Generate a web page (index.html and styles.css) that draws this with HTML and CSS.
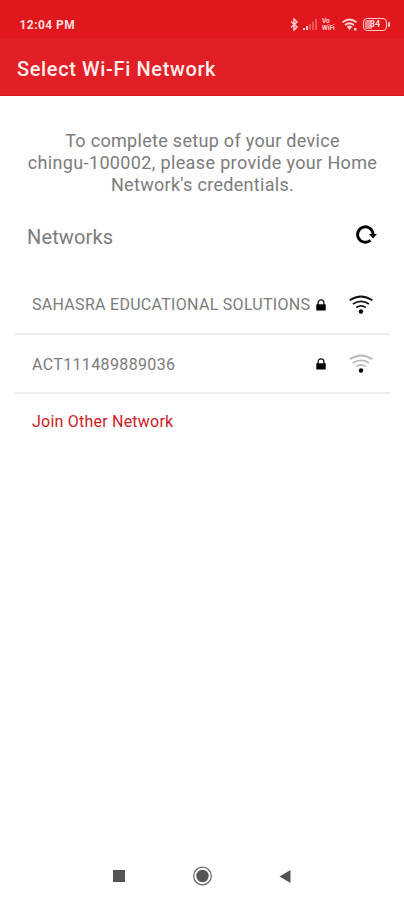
FILE: index.html
```html
<!DOCTYPE html>
<html lang="en">
<head>
<meta charset="utf-8">
<title>Select Wi-Fi Network</title>
<link rel="stylesheet" href="styles.css">
</head>
<body>
<div class="screen">
  <header class="status">
    <span class="time">12:04 PM</span>
    <div class="indicators">
      <svg class="bt" width="9" height="13" viewBox="0 0 9 13"><path d="M1 3.500l6 5.500-3 3V1l3 3-6 5.500"/></svg>
      <svg class="signal" width="16" height="13" viewBox="0 0 16 13"><path d="M0 10h2v2H0zM3 8h2v4H3z"/><path class="dim" d="M6 6h2v6H6zM9 3.500h2V12H9zM12 1h2v11h-2z"/></svg>
      <div class="vowifi"><span>Vo</span><span>WiFi</span></div>
      <svg class="wifi-status" width="16" height="13" viewBox="0 0 16 13"><path d="M.5 4.300q7-5.600 14 0M3 7q4.500-3.500 9 0"/><path class="fill" d="M4.700 8.600q2.800-2 5.600 0L7.500 12zM12 10h2.500v2.500H12z"/></svg>
      <div class="battery"><span>34</span></div>
    </div>
  </header>
  <div class="appbar"><h1>Select Wi-Fi Network</h1></div>
  <main>
    <p class="intro">To complete setup of your device<br><span class="second">chingu-100002, please provide your Home</span><br>Network's credentials.</p>
    <div class="heading">
      <h2>Networks</h2>
      <svg class="refresh" width="24" height="22" viewBox="0 0 24 22"><path class="ring" d="M16.500 16.200A7.700 7.700 0 1 1 19 10.500"/><path d="M15 10h8l-4 4.500z"/></svg>
    </div>
    <ul class="networks">
      <li>
        <span class="name long">SAHASRA EDUCATIONAL SOLUTIONS</span>
        <svg class="lock" width="10" height="12" viewBox="0 0 10 12"><path class="shackle" d="M2.100 6V3.700a2.900 2.900 0 0 1 5.800 0V6"/><path d="M.3 5.300h9.400v6.200H.3z"/></svg>
        <svg class="wifi" width="26" height="20" viewBox="0 0 26 20"><path d="M1.700 5.200q11.300-7.400 22.600 0M5 8.900q8-5.200 16 0M8.300 12.400q4.700-3.200 9.400 0"/><circle cx="13" cy="16.500" r="2.200"/></svg>
      </li>
      <li>
        <span class="name short">ACT111489889036</span>
        <svg class="lock" width="10" height="12" viewBox="0 0 10 12"><path class="shackle" d="M2.100 6V3.700a2.900 2.900 0 0 1 5.800 0V6"/><path d="M.3 5.300h9.400v6.200H.3z"/></svg>
        <svg class="wifi weak" width="26" height="20" viewBox="0 0 26 20"><path d="M1.700 5.200q11.300-7.400 22.600 0M5 8.900q8-5.200 16 0M8.300 12.400q4.700-3.200 9.400 0"/><circle cx="13" cy="16.500" r="2.200"/></svg>
      </li>
    </ul>
    <a class="join">Join Other Network</a>
  </main>
  <nav class="navbar">
    <svg width="20" height="20" viewBox="0 0 20 20"><path d="M4 4h12v12H4z"/></svg>
    <svg width="20" height="20" viewBox="0 0 20 20"><circle cx="10.500" cy="10" r="8.800" class="outline"/><circle cx="10.500" cy="10" r="6.200"/></svg>
    <svg width="20" height="20" viewBox="0 0 20 20"><path d="M15.500 4v13L4.500 10.500z"/></svg>
  </nav>
</div>
</body>
</html>
```
FILE: styles.css
```css
* { box-sizing: border-box; }
body { margin: 0; background: #fefefe; font-family: Roboto, "Liberation Sans", sans-serif; color: #7c7c7c; }
h1, h2, p, ul { margin: 0; padding: 0; font-weight: 400; }
svg { display: block; flex: none; }
.screen { width: 404px; height: 900px; display: flex; flex-direction: column; overflow: hidden; }

.status { height: 38px; background: #e1171e; color: #ffdcdc; display: flex; justify-content: space-between; align-items: flex-start; padding: 17px 15px 0 19.500px; }
.time { font-size: 12px; line-height: 16px; font-weight: 700; letter-spacing: .45px; }
.indicators { display: flex; align-items: center; height: 15px; fill: #ffc9c9; }
.bt { fill: none; stroke: #ffd0d0; stroke-width: 1.500; margin-right: 4px; }
.signal { margin-right: 3px; }
.dim { opacity: .35; }
.vowifi { display: flex; flex-direction: column; width: 17px; font-size: 6.500px; line-height: 7px; font-weight: 700; margin-right: 3px; color: #ffd0d0; }
.wifi-status { fill: none; stroke: #ffd0d0; stroke-width: 1.900; margin-right: 5px; }
.wifi-status .fill { fill: #ffd0d0; stroke: none; }
.battery { position: relative; width: 24px; height: 13px; border: 1.500px solid #ffc9c9; border-radius: 4px; padding: 1px; display: flex; margin-right: 2px; }
.battery span { width: 20px; background: linear-gradient(90deg, #f3898c 35%, transparent 35%); border-radius: 2px; font-size: 9px; line-height: 9px; font-weight: 700; color: #ffdede; text-align: center; }
.battery::after { content: ""; position: absolute; right: -4px; top: 3px; width: 2px; height: 5px; background: #ffc9c9; border-radius: 1px; }

.appbar { height: 58px; background: #e21e26; border-bottom: 1px solid #d81b22; padding: 18px 17px 0; }
h1 { font-size: 20px; line-height: 26px; font-weight: 500; color: #ffeeec; letter-spacing: .63px; white-space: nowrap; }

main { flex: 1; }
.intro { margin-top: 34px; padding-left: 1px; text-align: center; font-size: 18px; line-height: 22px; letter-spacing: .3px; white-space: nowrap; }
.second { letter-spacing: .36px; }
.heading { display: flex; justify-content: space-between; align-items: center; height: 28px; margin: 27px 26px 0 27px; }
h2 { font-size: 20px; line-height: 28px; letter-spacing: .15px; }
.refresh { margin-top: -5px; }
.ring { fill: none; stroke: #000; stroke-width: 2.900; }

.networks { list-style: none; margin: 24px 14px 0 15px; }
li { height: 59.500px; border-bottom: 2px solid #ededed; display: flex; align-items: center; padding: 2px 16px 0 17px; }
.name { width: 284px; font-size: 16px; line-height: 20px; white-space: nowrap; }
.long { letter-spacing: .29px; padding-top: 1px; }
.short { letter-spacing: .36px; padding-top: 1px; }
.lock { margin-right: 22px; }
.shackle { fill: none; stroke: #111; stroke-width: 1.300; }
.wifi path { fill: none; stroke: #111; stroke-width: 1.800; }
.wifi.weak path { stroke: #bbb; }
.join { display: block; margin: 18px 0 0 32px; font-size: 16px; line-height: 20px; letter-spacing: .22px; color: #cb2028; }

.navbar { height: 48px; padding: 14px 109px 0; display: flex; justify-content: space-between; fill: #555; }
.outline { fill: none; stroke: #666; stroke-width: 1.200; }
```
